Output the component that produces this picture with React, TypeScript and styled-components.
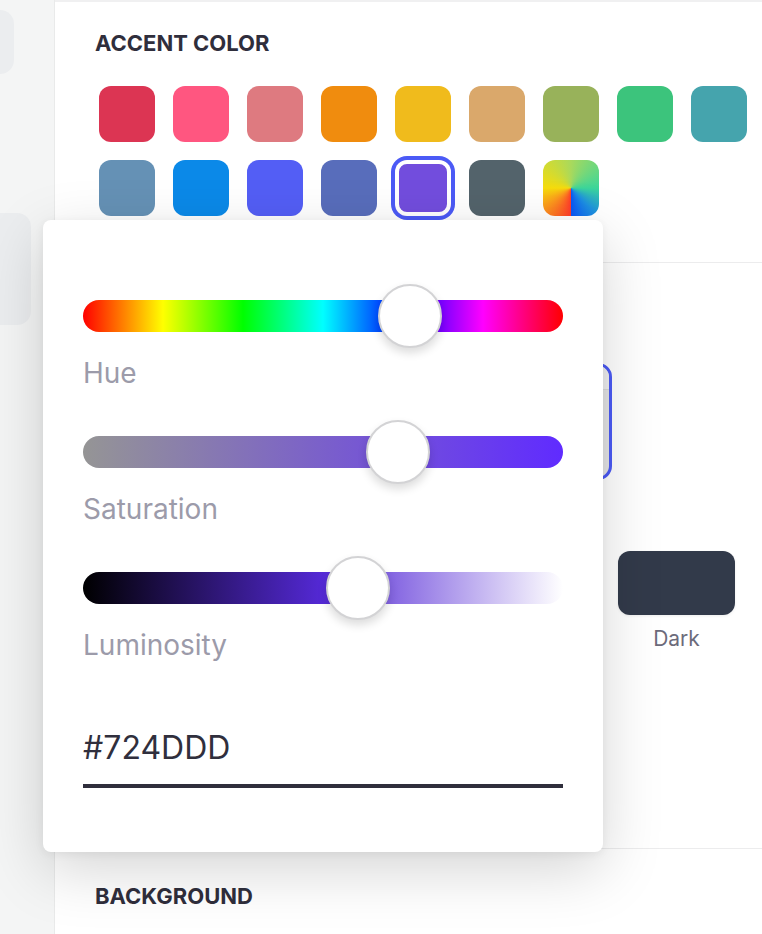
import styled, { createGlobalStyle } from 'styled-components';

const GlobalStyle = createGlobalStyle`
  html, body {
    margin: 0;
    padding: 0;
    background: #f4f5f5;
    font-family: Inter, "Noto Sans", "Liberation Sans", sans-serif;
    overflow: hidden;
  }
  * { box-sizing: border-box; }
`;

const Page = styled.div`
  display: flex;
  width: 762px;
  height: 934px;
  overflow: hidden;
  position: relative;
`;

const Sidebar = styled.aside`
  width: 55px;
  flex-shrink: 0;
  background: #f4f5f5;
  border-right: 1px solid #e9eaea;
  display: flex;
  flex-direction: column;
`;

const SideItem = styled.div<{ $w: number; $h: number; $top: number }>`
  width: ${(p) => p.$w}px;
  height: ${(p) => p.$h}px;
  margin-top: ${(p) => p.$top}px;
  background: #ebedef;
  border-radius: 0 14px 14px 0;
`;

const Main = styled.main`
  flex: 1;
  background: #fff;
  border-top: 2px solid #f0f0f1;
  display: flex;
  flex-direction: column;
`;

const Section = styled.section<{ $top: number; $bottom: number }>`
  padding: ${(p) => p.$top}px 0 ${(p) => p.$bottom}px 41px;
  border-bottom: 1px solid #ececed;
  display: flex;
  flex-direction: column;

  &:last-child {
    border-bottom: none;
  }
`;

const Heading = styled.h2`
  margin: 0;
  font-size: 22px;
  line-height: 28px;
  font-weight: 700;
  color: #2f2e3c;
  margin-left: -1px;
`;

const SwatchGrid = styled.div`
  display: grid;
  grid-template-columns: repeat(9, 56px);
  gap: 18px;
  margin-top: 29px;
  padding-left: 3px;
`;

const Swatch = styled.button<{ $fill: string; $selected?: boolean }>`
  width: 56px;
  height: 56px;
  border: none;
  padding: 0;
  border-radius: 12px;
  background: ${(p) => p.$fill};
  cursor: pointer;
  box-shadow: ${(p) => (p.$selected ? '0 0 0 4px #4b5af6, inset 0 0 0 4px #fff' : 'none')};
`;

const PreviewRow = styled.div`
  display: flex;
  justify-content: flex-end;
  margin-top: 43px;
  padding-right: 150px;
`;

const PreviewCard = styled.div`
  width: 380px;
  height: 117px;
  border: 3px solid #4b5af6;
  border-radius: 14px;
  background: #e7e7e8;
  overflow: hidden;
`;

const PreviewBar = styled.div`
  height: 24px;
  background: #f1f1f2;
  border-bottom: 1px solid #dcdcde;
`;

const ModeRow = styled.div`
  display: flex;
  justify-content: flex-end;
  gap: 24px;
  margin-top: 71px;
  padding-right: 27px;
`;

const ModeOption = styled.div`
  width: 117px;
  display: flex;
  flex-direction: column;
  align-items: center;
  gap: 11px;
`;

const ModeTile = styled.div<{ $bg: string }>`
  width: 117px;
  height: 64px;
  border-radius: 12px;
  background: ${(p) => p.$bg};
  box-shadow: 0 1px 3px rgba(0, 0, 0, 0.08);
`;

const ModeLabel = styled.span`
  font-size: 21px;
  line-height: 26px;
  color: #6c6b7b;
`;

const Popover = styled.div`
  position: absolute;
  left: 43px;
  top: 220px;
  width: 560px;
  height: 632px;
  background: #fff;
  border-radius: 8px;
  box-shadow: 0 18px 60px rgba(0, 0, 0, 0.17), 0 2px 10px rgba(0, 0, 0, 0.06);
  padding: 64px 40px;
  display: flex;
  flex-direction: column;
`;

const SliderGroup = styled.div`
  display: flex;
  flex-direction: column;
  gap: 9px;
  margin-bottom: 31px;
`;

const SliderRow = styled.div`
  position: relative;
  height: 64px;
  display: flex;
  align-items: center;
`;

const Track = styled.div<{ $gradient: string }>`
  width: 100%;
  height: 32px;
  border-radius: 16px;
  background: ${(p) => p.$gradient};
`;

const Thumb = styled.div`
  position: absolute;
  top: 0;
  width: 64px;
  height: 64px;
  border-radius: 50%;
  background: #fff;
  border: 2px solid #d3d3d5;
  box-shadow: 0 5px 10px rgba(0, 0, 0, 0.14);
`;

const SliderLabel = styled.span`
  font-size: 28px;
  line-height: 32px;
  color: #9c9baa;
`;

const HexInput = styled.input`
  margin-top: 35px;
  width: 100%;
  border: none;
  border-bottom: 4px solid #2f2e3c;
  padding: 0 0 17px;
  font-family: inherit;
  font-size: 32px;
  line-height: 40px;
  height: 61px;
  color: #302f3d;
  outline: none;
  background: transparent;
`;

const accentColors = [
  '#dc3553', '#ff5680', '#de7a80', '#f08c0e', '#f0bb1c', '#daa86b', '#98b25a', '#3cc47c', '#45a4ad',
  '#6591b5', '#0b89e8', '#535ef5', '#586dbb', '#724ddd', '#53636b',
  'conic-gradient(from 180deg at 50% 50%, #ff3a2a, #fb9a1c 15%, #f6dc0c 25%, #a9d95c 50%, #3cd69a 75%, #1d8fe0 88%, #0a55f6)',
];

const selectedHex = '#724DDD';

function hexToHsl(hex: string) {
  const r = parseInt(hex.slice(1, 3), 16) / 255;
  const g = parseInt(hex.slice(3, 5), 16) / 255;
  const b = parseInt(hex.slice(5, 7), 16) / 255;
  const max = Math.max(r, g, b);
  const min = Math.min(r, g, b);
  const l = (max + min) / 2;
  let h = 0;
  let s = 0;
  if (max !== min) {
    const d = max - min;
    s = l > 0.5 ? d / (2 - max - min) : d / (max + min);
    if (max === r) h = (g - b) / d + (g < b ? 6 : 0);
    else if (max === g) h = (b - r) / d + 2;
    else h = (r - g) / d + 4;
    h *= 60;
  }
  return { h, s: s * 100, l: l * 100 };
}

const Slider = ({ label, value, gradient }: { label: string; value: number; gradient: string }) => (
  <SliderGroup>
    <SliderRow>
      <Track $gradient={gradient} />
      <Thumb style={{ left: `calc((100% - 64px) * ${value})` }} />
    </SliderRow>
    <SliderLabel>{label}</SliderLabel>
  </SliderGroup>
);

const App = () => {
  const { h, s, l } = hexToHsl(selectedHex);
  const hue = Math.round(h);

  return (
    <Page>
      <GlobalStyle />
      <Sidebar>
        <SideItem $w={14} $h={64} $top={10} />
        <SideItem $w={31} $h={112} $top={139} />
      </Sidebar>

      <Main>
        <Section $top={27} $bottom={46}>
          <Heading>ACCENT COLOR</Heading>
          <SwatchGrid>
            {accentColors.map((c) => (
              <Swatch key={c} $fill={c} $selected={c.toUpperCase() === selectedHex} />
            ))}
          </SwatchGrid>
        </Section>

        <Section $top={29} $bottom={196}>
          <Heading>THEME</Heading>
          <PreviewRow>
            <PreviewCard>
              <PreviewBar />
            </PreviewCard>
          </PreviewRow>
          <ModeRow>
            <ModeOption>
              <ModeTile $bg="#ffffff" />
              <ModeLabel>Light</ModeLabel>
            </ModeOption>
            <ModeOption>
              <ModeTile $bg="#5b6476" />
              <ModeLabel>Dim</ModeLabel>
            </ModeOption>
            <ModeOption>
              <ModeTile $bg="#323a4a" />
              <ModeLabel>Dark</ModeLabel>
            </ModeOption>
          </ModeRow>
        </Section>

        <Section $top={33} $bottom={0}>
          <Heading>BACKGROUND</Heading>
        </Section>
      </Main>

      <Popover>
        <Slider
          label="Hue"
          value={h / 360}
          gradient="linear-gradient(to right, #ff0000 0%, #ffff00 16.67%, #00ff00 33.33%, #00ffff 50%, #0000ff 66.67%, #ff00ff 83.33%, #ff0000 100%)"
        />
        <Slider
          label="Saturation"
          value={s / 100}
          gradient={`linear-gradient(to right, hsl(${hue}, 0%, ${l}%), hsl(${hue}, 100%, ${l}%))`}
        />
        <Slider
          label="Luminosity"
          value={l / 100}
          gradient={`linear-gradient(to right, hsl(${hue}, ${s}%, 0%), hsl(${hue}, ${s}%, 50%), hsl(${hue}, ${s}%, 100%))`}
        />
        <HexInput defaultValue={selectedHex} />
      </Popover>
    </Page>
  );
};

export default App;
